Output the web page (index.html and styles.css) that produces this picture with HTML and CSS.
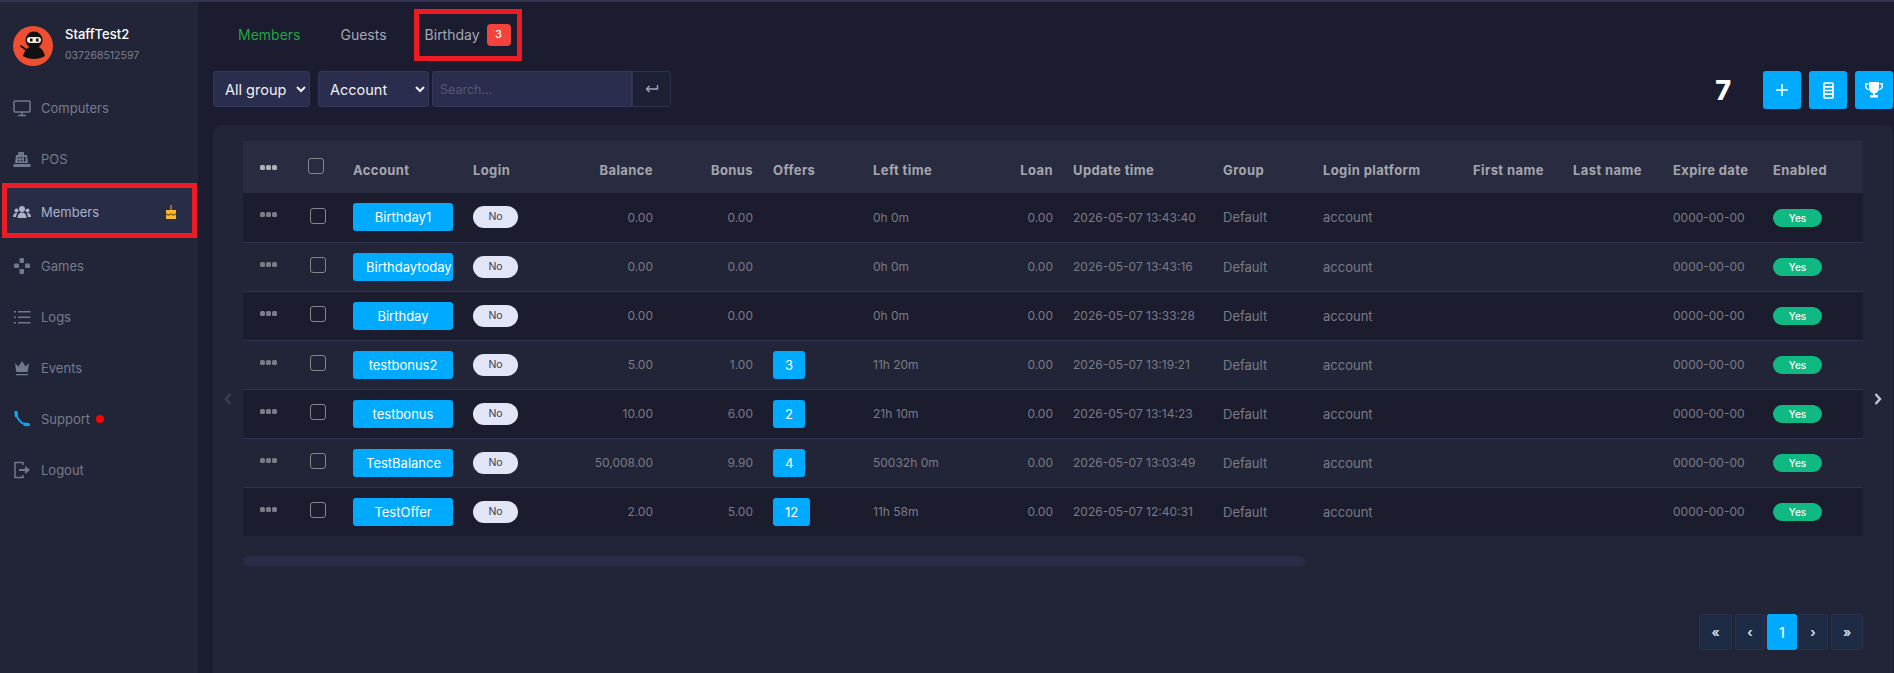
FILE: index.html
```html
<!DOCTYPE html>
<html lang="en">
<head>
  <meta charset="UTF-8" />
  <title>Members</title>
  <link rel="stylesheet" href="styles.css">
</head>
<body>
  <!-- Sidebar -->
  <aside class="sidebar">
    <div class="profile">
      <svg class="avatar" viewBox="0 0 40 40">
        <circle cx="20" cy="20" r="20" fill="#f04e30"/>
        <path d="M8 19l7 5-1 1.500-7-5z" fill="#111"/>
        <path d="M10 30c1.500-6 5-10 11-10s9.500 4 11 10c-3 2-7 3-11 3s-8-1-11-3z" fill="#111"/>
        <circle cx="21" cy="14" r="8.500" fill="#111"/>
        <rect x="14" y="11" width="14" height="6" rx="3" fill="#f4e9d8"/>
        <rect x="17" y="12.500" width="2.500" height="3" fill="#111"/>
        <rect x="23" y="12.500" width="2.500" height="3" fill="#111"/>
      </svg>
      <div class="profile-text">
        <div class="profile-name">StaffTest2</div>
        <div class="profile-phone">037268512597</div>
      </div>
    </div>
    <nav class="nav">
      <a class="nav-item">
        <svg class="nav-icon" viewBox="0 0 18 18" fill="none" stroke="#6f7a90" stroke-width="1.500"><rect x="1" y="2" width="16" height="11" rx="1"/><path d="M9 13v3M5 16.500h8"/></svg>
        Computers
      </a>
      <a class="nav-item">
        <svg class="nav-icon" viewBox="0 0 18 18" fill="#6f7a90"><path d="M5 2h6v3H5V3.200h4.800V3H5z"/><path d="M3 5h11l1 8H2z"/><path d="M0.500 14h17v3H0.500z"/><path d="M5 7h1.500v1.500H5zM8 7h1.500v1.500H8zM5 10h1.500v1.500H5zM8 10h1.500v1.500H8zM11 7h1.500v4.500H11z" fill="#222538"/></svg>
        POS
      </a>
      <a class="nav-item nav-item-active">
        <svg class="nav-icon" viewBox="0 0 18 18" fill="#aab2c8"><circle cx="9" cy="6" r="3"/><circle cx="3.500" cy="7.500" r="2"/><circle cx="14.500" cy="7.500" r="2"/><path d="M4.500 15c0-3.500 2-5.500 4.500-5.500s4.500 2 4.500 5.500z"/><path d="M0 14c0-2.500 1.300-4 3.200-4 .5 0 .8.100 1.100.300C3.500 11.300 3.200 12.500 3.100 14zM18 14c0-2.500-1.300-4-3.200-4-.5 0-.8.100-1.100.300.8 1 1.100 2.200 1.200 3.700z"/></svg>
        Members
        <svg class="cake" viewBox="0 0 12 14"><path d="M5.200 0h1.600v3H5.200z" fill="#e2604a"/><path d="M5.500 3h1v2h-1z" fill="#f5b82e"/><path d="M1 5h10v9H1z" fill="#f5b82e"/><path d="M1 8l2.500 1.500L6 8l2.500 1.500L11 8v1.500l-2.500 1.500L6 9.500 3.500 11 1 9.500z" fill="#8a5a12"/></svg>
      </a>
      <a class="nav-item">
        <svg class="nav-icon" viewBox="0 0 18 18" fill="#6f7a90"><rect x="6.500" y="1" width="4.500" height="5" rx="1"/><rect x="6.500" y="12" width="4.500" height="5" rx="1"/><rect x="1" y="6.500" width="5" height="4.500" rx="1"/><rect x="12" y="6.500" width="5" height="4.500" rx="1"/></svg>
        Games
      </a>
      <a class="nav-item">
        <svg class="nav-icon" viewBox="0 0 18 18" fill="#6f7a90"><path d="M1 3h2v1.500H1zM5 3h12.500v1.500H5zM1 8.500h2V10H1zM5 8.500h12.500V10H5zM1 14h2v1.500H1zM5 14h12.500v1.500H5z"/></svg>
        Logs
      </a>
      <a class="nav-item">
        <svg class="nav-icon" viewBox="0 0 18 18" fill="#6f7a90"><path d="M2 4l3.500 3.500L9 2l3.500 5.500L16 4l-1.300 9H3.300z"/><path d="M3 15h12v1.300H3z"/></svg>
        Events
      </a>
      <a class="nav-item">
        <svg class="nav-icon" viewBox="0 0 18 18" fill="none" stroke="#0ea5f0" stroke-linecap="round"><path d="M3.500 3c0 6 5 11.500 11.500 11.500" stroke-width="1.800"/><path d="M3 2.500l.4 3.300M11.800 14.200l3.500.4" stroke-width="3.400"/></svg>
        Support
        <span class="red-dot"></span>
      </a>
      <a class="nav-item">
        <svg class="nav-icon" viewBox="0 0 18 18" fill="none" stroke="#6f7a90" stroke-width="1.500"><path d="M10 4V1.500H2v15h8V14"/><path d="M6 9h7" stroke-width="2"/><path d="M12 5l5 4-5 4z" fill="#6f7a90" stroke="none"/></svg>
        Logout
      </a>
    </nav>
  </aside>

  <main class="main">
    <!-- Tabs -->
    <div class="tabs">
      <a class="tab tab-active">Members</a>
      <a class="tab">Guests</a>
      <a class="tab tab-marked">Birthday <span class="tab-badge">3</span></a>
    </div>

    <!-- Filters and tools -->
    <div class="toolbar">
      <div class="filters">
        <select class="filter-select filter-group"><option>All group</option></select>
        <select class="filter-select filter-field"><option>Account</option></select>
        <div class="search">
          <input class="search-input" type="text" placeholder="Search..." />
          <button class="search-btn">
            <svg viewBox="0 0 14 10" width="14" height="10" fill="none" stroke="#a5a7b8" stroke-width="1.300"><path d="M12.500 1v4H1.500M4.500 2L1.500 5l3 3"/></svg>
          </button>
        </div>
      </div>
      <div class="tools">
        <span class="total">7</span>
        <button class="tool-btn">
          <svg viewBox="0 0 14 14" width="14" height="14" fill="none" stroke="#fff" stroke-width="1.600"><path d="M7 1v12M1 7h12"/></svg>
        </button>
        <button class="tool-btn">
          <svg viewBox="0 0 11 17" width="11" height="17" fill="none" stroke="#fff" stroke-width="1.700"><rect x="1" y="1" width="9" height="15" rx="1"/><path d="M1 4.800h9M1 8.500h9M1 12.200h9"/></svg>
        </button>
        <button class="tool-btn">
          <svg viewBox="0 0 18 16" width="18" height="16" fill="#fff"><path d="M4 0h10v6c0 3-2 5-4 5.300V13h3v2.500H5V13h3v-1.700C6 11 4 9 4 6z"/><path d="M3.500 1H0v3c0 2.500 1.800 4 4 4.200L3.800 7C2.500 6.700 1.500 5.700 1.500 4V2.500h2zM14.500 1H18v3c0 2.500-1.800 4-4 4.200L14.200 7c1.300-.3 2.300-1.300 2.300-3V2.500h-2z"/></svg>
        </button>
      </div>
    </div>

    <!-- Members table -->
    <section class="panel">
      <svg class="pager-arrow pager-arrow-left" viewBox="0 0 8 12" fill="none" stroke="#3c3e52" stroke-width="2.400"><path d="M6.500 1L2 6l4.500 5"/></svg>
      <svg class="pager-arrow pager-arrow-right" viewBox="0 0 8 12" fill="none" stroke="#c4c6d0" stroke-width="2.400"><path d="M1.500 1L6 6l-4.500 5"/></svg>
      <table class="members">
        <colgroup>
          <col class="c50"><col class="c50"><col class="c120"><col class="c100"><col class="c100"><col class="c100"><col class="c100"><col class="c100"><col class="c100"><col class="c150"><col class="c100"><col class="c150"><col class="c100"><col class="c100"><col class="c100"><col class="c100">
        </colgroup>
        <thead>
          <tr>
            <th><span class="dots"><i></i><i></i><i></i></span></th>
            <th><span class="check check-head"></span></th>
            <th>Account</th>
            <th>Login</th>
            <th class="num">Balance</th>
            <th class="num">Bonus</th>
            <th>Offers</th>
            <th>Left time</th>
            <th class="num">Loan</th>
            <th>Update time</th>
            <th>Group</th>
            <th>Login platform</th>
            <th>First name</th>
            <th>Last name</th>
            <th>Expire date</th>
            <th>Enabled</th>
          </tr>
        </thead>
        <tbody>
          <tr>
            <td><span class="dots"><i></i><i></i><i></i></span></td><td><span class="check"></span></td>
            <td><a class="account-btn">Birthday1</a></td><td><span class="pill-no">No</span></td>
            <td class="num">0.00</td><td class="num">0.00</td><td></td><td>0h 0m</td><td class="num">0.00</td>
            <td>2026-05-07 13:43:40</td><td class="word">Default</td><td class="word">account</td><td></td><td></td><td>0000-00-00</td>
            <td><span class="pill-yes">Yes</span></td>
          </tr>
          <tr>
            <td><span class="dots"><i></i><i></i><i></i></span></td><td><span class="check"></span></td>
            <td><a class="account-btn">Birthdaytoday</a></td><td><span class="pill-no">No</span></td>
            <td class="num">0.00</td><td class="num">0.00</td><td></td><td>0h 0m</td><td class="num">0.00</td>
            <td>2026-05-07 13:43:16</td><td class="word">Default</td><td class="word">account</td><td></td><td></td><td>0000-00-00</td>
            <td><span class="pill-yes">Yes</span></td>
          </tr>
          <tr>
            <td><span class="dots"><i></i><i></i><i></i></span></td><td><span class="check"></span></td>
            <td><a class="account-btn">Birthday</a></td><td><span class="pill-no">No</span></td>
            <td class="num">0.00</td><td class="num">0.00</td><td></td><td>0h 0m</td><td class="num">0.00</td>
            <td>2026-05-07 13:33:28</td><td class="word">Default</td><td class="word">account</td><td></td><td></td><td>0000-00-00</td>
            <td><span class="pill-yes">Yes</span></td>
          </tr>
          <tr>
            <td><span class="dots"><i></i><i></i><i></i></span></td><td><span class="check"></span></td>
            <td><a class="account-btn">testbonus2</a></td><td><span class="pill-no">No</span></td>
            <td class="num">5.00</td><td class="num">1.00</td><td><a class="offer-btn">3</a></td><td>11h 20m</td><td class="num">0.00</td>
            <td>2026-05-07 13:19:21</td><td class="word">Default</td><td class="word">account</td><td></td><td></td><td>0000-00-00</td>
            <td><span class="pill-yes">Yes</span></td>
          </tr>
          <tr>
            <td><span class="dots"><i></i><i></i><i></i></span></td><td><span class="check"></span></td>
            <td><a class="account-btn">testbonus</a></td><td><span class="pill-no">No</span></td>
            <td class="num">10.00</td><td class="num">6.00</td><td><a class="offer-btn">2</a></td><td>21h 10m</td><td class="num">0.00</td>
            <td>2026-05-07 13:14:23</td><td class="word">Default</td><td class="word">account</td><td></td><td></td><td>0000-00-00</td>
            <td><span class="pill-yes">Yes</span></td>
          </tr>
          <tr>
            <td><span class="dots"><i></i><i></i><i></i></span></td><td><span class="check"></span></td>
            <td><a class="account-btn">TestBalance</a></td><td><span class="pill-no">No</span></td>
            <td class="num">50,008.00</td><td class="num">9.90</td><td><a class="offer-btn">4</a></td><td>50032h 0m</td><td class="num">0.00</td>
            <td>2026-05-07 13:03:49</td><td class="word">Default</td><td class="word">account</td><td></td><td></td><td>0000-00-00</td>
            <td><span class="pill-yes">Yes</span></td>
          </tr>
          <tr>
            <td><span class="dots"><i></i><i></i><i></i></span></td><td><span class="check"></span></td>
            <td><a class="account-btn">TestOffer</a></td><td><span class="pill-no">No</span></td>
            <td class="num">2.00</td><td class="num">5.00</td><td><a class="offer-btn">12</a></td><td>11h 58m</td><td class="num">0.00</td>
            <td>2026-05-07 12:40:31</td><td class="word">Default</td><td class="word">account</td><td></td><td></td><td>0000-00-00</td>
            <td><span class="pill-yes">Yes</span></td>
          </tr>
        </tbody>
      </table>

      <div class="scrollbar"><div class="scrollbar-thumb"></div></div>

      <div class="pagination">
        <a class="page-link page-first">&laquo;</a>
        <a class="page-link">&lsaquo;</a>
        <a class="page-link page-current">1</a>
        <a class="page-link">&rsaquo;</a>
        <a class="page-link page-last">&raquo;</a>
      </div>
    </section>
  </main>
</body>
</html>
```

FILE: styles.css
```css
* {
  margin: 0;
  padding: 0;
  box-sizing: border-box;
  font-family: Inter, 'Open Sans', sans-serif;
}

html, body {
  width: 1894px;
  height: 673px;
  overflow: hidden;
  background: #1b1c30;
}

body {
  display: flex;
  border-top: 2px solid #32344f;
}

/* Sidebar */
.sidebar {
  width: 198px;
  flex-shrink: 0;
  background: #222538;
  padding-top: 24px;
}

.profile {
  display: flex;
  align-items: center;
  gap: 12px;
  padding-left: 13px;
  height: 40px;
}

.avatar {
  width: 40px;
  height: 40px;
  flex-shrink: 0;
}

.profile-text {
  margin-top: -3px;
}

.profile-name {
  color: #fff;
  font-size: 13px;
  font-weight: 500;
  line-height: 16px;
}

.profile-phone {
  color: #7d8090;
  font-size: 10.500px;
  margin-top: 7px;
  line-height: 14px;
}

.nav {
  margin-top: 16px;
  display: flex;
  flex-direction: column;
}

.nav-item {
  height: 51px;
  display: flex;
  align-items: center;
  padding-left: 13px;
  color: #777b8c;
  font-size: 13px;
}

.nav-icon {
  width: 18px;
  height: 18px;
  margin-right: 10px;
  flex-shrink: 0;
}

.nav-item-active {
  height: 55px;
  margin: -1px 1px 2px 2px;
  padding: 3px 0 0 6px;
  background: #292c47;
  border: 5px solid #ed1c24;
  color: #aab2c8;
}

.cake {
  width: 12px;
  height: 14px;
  margin-left: auto;
  margin-right: 15px;
}

.red-dot {
  width: 8px;
  height: 8px;
  border-radius: 50%;
  background: #ff0000;
  margin-left: 6px;
}

/* Main */
.main {
  flex: 1;
  min-width: 0;
  padding: 0 1px 0 15px;
  display: flex;
  flex-direction: column;
}

.tabs {
  display: flex;
  align-items: center;
  height: 69px;
  padding: 0 0 4px 25px;
  gap: 40px;
  font-size: 14px;
}

.tab {
  color: #a6a8b4;
}

.tab-active {
  color: #22a63f;
}

.tab-marked {
  display: flex;
  align-items: center;
  gap: 7px;
  height: 52px;
  margin-left: -13px;
  padding: 0 6px 0 6px;
  border: 5px solid #ed1c24;
}

.tab-badge {
  width: 24px;
  height: 22px;
  border-radius: 4px;
  background: #f4433c;
  color: #fff;
  font-size: 10.500px;
  font-weight: 500;
  display: flex;
  align-items: center;
  justify-content: center;
}

.toolbar {
  display: flex;
  justify-content: space-between;
  height: 38px;
}

.filters {
  display: flex;
  gap: 8px;
  align-items: flex-start;
}

.filter-select {
  height: 36px;
  background: #2b2d4e;
  border: 1px solid #34365a;
  border-radius: 3px;
  color: #f0f1f5;
  font-size: 14.500px;
  padding-left: 7px;
}

.filter-group {
  width: 97px;
}

.filter-field {
  width: 111px;
}

.search {
  display: flex;
  margin-left: -5px;
}

.search-input {
  width: 200px;
  height: 36px;
  background: #2b2d4e;
  border: 1px solid #34365a;
  border-radius: 3px 0 0 3px;
  padding-left: 7px;
  font-size: 12.500px;
  color: #fff;
  outline: none;
}

.search-input::placeholder {
  color: #565870;
}

.search-btn {
  width: 39px;
  height: 36px;
  background: #1e2036;
  border: 1px solid #2f3150;
  border-radius: 0 3px 3px 0;
  display: flex;
  align-items: center;
  justify-content: center;
}

.tools {
  display: flex;
  align-items: center;
  gap: 8px;
}

.total {
  color: #fff;
  font-size: 27px;
  font-weight: 800;
  margin-right: 24px;
}

.tool-btn {
  width: 38px;
  height: 38px;
  border: none;
  border-radius: 3px;
  background: #00aaff;
  display: flex;
  align-items: center;
  justify-content: center;
}

/* Panel */
.panel {
  position: relative;
  margin-top: 16px;
  flex: 1;
  background: #222538;
  border-radius: 8px 8px 0 0;
  padding: 16px 30px 0;
}

.pager-arrow {
  position: absolute;
  top: 268px;
  width: 8px;
  height: 12px;
}

.pager-arrow-left {
  left: 11px;
}

.pager-arrow-right {
  right: 11px;
}

.members {
  width: 1620px;
  table-layout: fixed;
  border-collapse: collapse;
}

.c50 { width: 50px; }
.c100 { width: 100px; }
.c120 { width: 120px; }
.c150 { width: 150px; }

.members th {
  height: 52px;
  padding: 6px 10px 0;
  background: #292c40;
  color: #a5a6ae;
  font-size: 13px;
  font-weight: 700;
  letter-spacing: 0.4px;
  text-align: left;
  white-space: nowrap;
}

.members td {
  height: 49px;
  padding: 0 10px;
  color: #7a7b85;
  font-size: 12px;
  white-space: nowrap;
  border-bottom: 1px solid #2f3150;
}

.members td.word {
  font-size: 13px;
}

.members tbody tr:nth-child(odd) td {
  background: #1b1c2e;
}

.members tbody tr:last-child td {
  border-bottom: none;
}

.members .num {
  text-align: right;
}

.dots {
  display: flex;
  gap: 1px;
  margin: -5px 0 0 7px;
}

.dots i {
  width: 5px;
  height: 5px;
  border-radius: 1.500px;
  background: #7b7c86;
}

th .dots i {
  background: #b0b1b8;
}

.check {
  display: block;
  width: 16px;
  height: 16px;
  margin: -3px 0 0 7px;
  border: 1.500px solid #85858c;
  border-radius: 3px;
}

.check-head {
  margin: -9px 0 0 5px;
}

.account-btn {
  display: block;
  width: 100px;
  height: 28px;
  line-height: 28px;
  padding: 0 13px;
  border-radius: 3px;
  background: #00aaff;
  color: #fff;
  font-size: 13px;
  font-weight: 400;
  text-align: center;
  overflow: hidden;
}

.pill-no {
  display: block;
  width: 45px;
  height: 22px;
  line-height: 22px;
  border-radius: 11px;
  background: #e2e5f6;
  color: #3c3e52;
  font-size: 10.500px;
  text-align: center;
}

.offer-btn {
  display: inline-block;
  height: 28px;
  line-height: 28px;
  padding: 0 12px;
  border-radius: 3px;
  background: #00aaff;
  color: #fff;
  font-size: 13px;
  font-weight: 400;
  vertical-align: middle;
}

.pill-yes {
  display: block;
  width: 49px;
  height: 18px;
  line-height: 18px;
  margin-top: 1px;
  border-radius: 9px;
  background: #10b981;
  color: #fff;
  font-size: 10px;
  font-weight: 500;
  text-align: center;
}

.scrollbar {
  margin-top: 20px;
  height: 10px;
}

.scrollbar-thumb {
  width: 1062px;
  height: 10px;
  border-radius: 5px;
  background: #2a2c47;
}

.pagination {
  margin-top: 48px;
  width: 1620px;
  display: flex;
  justify-content: flex-end;
  gap: 2px;
}

.page-link {
  width: 30px;
  height: 36px;
  background: #1d2c44;
  border: 1px solid #2c2f50;
  border-radius: 2px;
  color: #dfe6ee;
  font-size: 13px;
  font-weight: 600;
  display: flex;
  align-items: center;
  justify-content: center;
}

.page-first {
  width: 33px;
  margin-right: 1px;
}

.page-last {
  width: 32px;
  margin-left: 1px;
}

.page-current {
  margin-right: -1px;
  background: #00aaff;
  border-color: #00aaff;
  color: #fff;
  font-size: 14px;
  font-weight: 500;
}
```
